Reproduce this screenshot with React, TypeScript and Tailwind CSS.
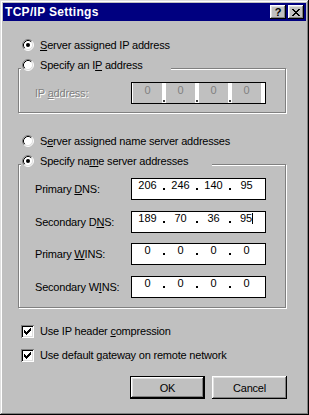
import { Fragment, type ReactNode } from 'react';

const raised =
  'shadow-[inset_-1px_-1px_0_#000,inset_1px_1px_0_#fff,inset_-2px_-2px_0_#808080,inset_2px_2px_0_#dfdfdf]';
const disabledText = 'text-[#808080] [text-shadow:1px_1px_0_#fff]';

function Radio({ checked }: { checked?: boolean }) {
  return (
    <svg width="12" height="12" viewBox="0 0 12 12" className="shrink-0">
      <circle cx="6" cy="6" r="5" fill="#fff" />
      <path d="M9.89 2.11A5.5 5.5 0 0 0 2.11 9.89" fill="none" stroke="#808080" />
      <path d="M2.11 9.89A5.5 5.5 0 0 0 9.89 2.11" fill="none" stroke="#fff" />
      <path d="M9.18 2.82A4.5 4.5 0 0 0 2.82 9.18" fill="none" stroke="#000" />
      <path d="M2.82 9.18A4.5 4.5 0 0 0 9.18 2.82" fill="none" stroke="#dfdfdf" />
      {checked && <circle cx="6" cy="6" r="2" fill="#000" />}
    </svg>
  );
}

function Check() {
  // win95 style 7x7 tick
  const rows: [number, number, number][] = [
    [0, 6, 1],
    [1, 5, 2],
    [2, 0, 1],
    [2, 4, 3],
    [3, 0, 2],
    [3, 3, 3],
    [4, 0, 5],
    [5, 1, 3],
    [6, 2, 1],
  ];
  return (
    <div className="w-[13px] h-[13px] bg-white shrink-0 shadow-[inset_1px_1px_0_#808080,inset_-1px_-1px_0_#fff,inset_2px_2px_0_#000,inset_-2px_-2px_0_#dfdfdf]">
      <svg width="13" height="13" viewBox="0 0 13 13" shapeRendering="crispEdges">
        {rows.map(([y, x, w], i) => (
          <rect key={i} x={3 + x} y={3 + y} width={w} height={1} fill="#000" />
        ))}
      </svg>
    </div>
  );
}

function IpField({
  values,
  disabled,
  caret,
}: {
  values: string[];
  disabled?: boolean;
  caret?: boolean;
}) {
  return (
    <div className="flex w-[135px] h-[22px] border border-black bg-white pl-[1px] tracking-normal">
      {values.map((v, i) => (
        <Fragment key={i}>
          <div
            className={`w-[29px] h-full text-center leading-[11px] ${
              disabled ? 'bg-[#c0c0c0] text-[#808080] pt-[2px]' : 'pt-[1px]'
            }`}
          >
            {v}
            {caret && i === 3 && (
              <span className="inline-block w-[1px] h-[11px] bg-black align-top" />
            )}
          </div>
          {i < 3 && (
            <div
              className={`w-[4px] flex items-end justify-center ${
                disabled ? 'pb-[1px]' : 'pb-[9px]'
              }`}
            >
              <div className={`w-[2px] h-[2px] ${disabled ? 'bg-[#404040]' : 'bg-black'}`} />
            </div>
          )}
        </Fragment>
      ))}
    </div>
  );
}

function GroupBox({
  legend,
  legendWidth,
  children,
  className,
}: {
  legend: ReactNode;
  legendWidth: string;
  children: ReactNode;
  className?: string;
}) {
  return (
    <div
      className={`w-[268px] border border-[#808080] shadow-[1px_1px_0_#fff,inset_1px_1px_0_#fff] ${className}`}
    >
      <div className={`-mt-[12px] ml-[2px] h-[16px] bg-[#c0c0c0] flex items-center pl-[1px] ${legendWidth}`}>
        {legend}
      </div>
      {children}
    </div>
  );
}

function RadioLabel({ checked, children }: { checked?: boolean; children: ReactNode }) {
  return (
    <div className="flex items-center gap-[6px] h-[16px]">
      <Radio checked={checked} />
      <span>{children}</span>
    </div>
  );
}

function FieldRow({
  label,
  values,
  className,
  caret,
}: {
  label: ReactNode;
  values: string[];
  className?: string;
  caret?: boolean;
}) {
  return (
    <div className={`flex items-center pl-[16px] ${className}`}>
      <span className="w-[96px]">{label}</span>
      <IpField values={values} caret={caret} />
    </div>
  );
}

export default function App() {
  return (
    <div className="w-[309px] h-[415px] bg-[#c0c0c0] p-[3px] text-[11px] leading-[16px] tracking-[-0.2px] text-black font-['Liberation_Sans',Arial,sans-serif] shadow-[inset_-1px_-1px_0_#000,inset_1px_1px_0_#dfdfdf,inset_-2px_-2px_0_#808080,inset_2px_2px_0_#fff]">
      {/* caption */}
      <div className="h-[18px] bg-[#000080] flex items-center justify-between pl-[2px] pr-[2px]">
        <span className="text-white font-bold text-[12px] tracking-[0.3px]">TCP/IP Settings</span>
        <div className="flex gap-[2px]">
          <div className={`w-[16px] h-[14px] bg-[#c0c0c0] flex items-center justify-center font-bold text-[11px] leading-[11px] pt-[1px] ${raised}`}>
            ?
          </div>
          <div className={`w-[16px] h-[14px] bg-[#c0c0c0] flex items-center justify-center ${raised}`}>
            <svg width="8" height="7" viewBox="0 0 8 7" shapeRendering="crispEdges">
              <path
                d="M0 0h2v1H0zM6 0h2v1H6zM1 1h2v1H1zM5 1h2v1H5zM2 2h4v1H2zM3 3h2v1H3zM2 4h4v1H2zM1 5h2v1H1zM5 5h2v1H5zM0 6h2v1H0zM6 6h2v1H6z"
                fill="#000"
              />
            </svg>
          </div>
        </div>
      </div>

      <div className="pl-[15px]">
        <div className="mt-[16px] pl-[4px]">
          <RadioLabel checked>
            <u>S</u>erver assigned IP address
          </RadioLabel>
        </div>

        <GroupBox
          className="mt-[15px] pb-[8px]"
          legendWidth="w-[150px]"
          legend={
            <RadioLabel>
              Specify an I<u>P</u> address
            </RadioLabel>
          }
        >
          <div className="flex items-center pl-[16px] mt-[9px]">
            <span className={`w-[96px] ${disabledText}`}>
              IP <u>a</u>ddress:
            </span>
            <IpField values={['0', '0', '0', '0']} disabled />
          </div>
        </GroupBox>

        <div className="mt-[20px] pl-[4px]">
          <RadioLabel>
            S<u>e</u>rver assigned name server addresses
          </RadioLabel>
        </div>

        <GroupBox
          className="mt-[15px] pb-[9px]"
          legendWidth="w-[191px]"
          legend={
            <RadioLabel checked>
              Specify na<u>m</u>e server addresses
            </RadioLabel>
          }
        >
          <FieldRow
            className="mt-[9px]"
            label={
              <>
                Primary <u>D</u>NS:
              </>
            }
            values={['206', '246', '140', '95']}
          />
          <FieldRow
            className="mt-[11px]"
            label={
              <>
                Secondary D<u>N</u>S:
              </>
            }
            values={['189', '70', '36', '95']}
            caret
          />
          <FieldRow
            className="mt-[10px]"
            label={
              <>
                Primary <u>W</u>INS:
              </>
            }
            values={['0', '0', '0', '0']}
          />
          <FieldRow
            className="mt-[11px]"
            label={
              <>
                Secondary W<u>I</u>NS:
              </>
            }
            values={['0', '0', '0', '0']}
          />
        </GroupBox>

        <div className="mt-[15px] pl-[3px] flex items-center gap-[6px] h-[16px]">
          <Check />
          <span>
            Use IP header <u>c</u>ompression
          </span>
        </div>
        <div className="mt-[8px] pl-[3px] flex items-center gap-[6px] h-[16px]">
          <Check />
          <span>
            Use default <u>g</u>ateway on remote network
          </span>
        </div>

        <div className="mt-[13px] ml-[112px] flex gap-[7px]">
          <button
            className={`w-[75px] h-[23px] bg-[#c0c0c0] border border-black flex items-center justify-center ${raised}`}
          >
            OK
          </button>
          <button
            className={`w-[75px] h-[23px] bg-[#c0c0c0] flex items-center justify-center ${raised}`}
          >
            Cancel
          </button>
        </div>
      </div>
    </div>
  );
}
